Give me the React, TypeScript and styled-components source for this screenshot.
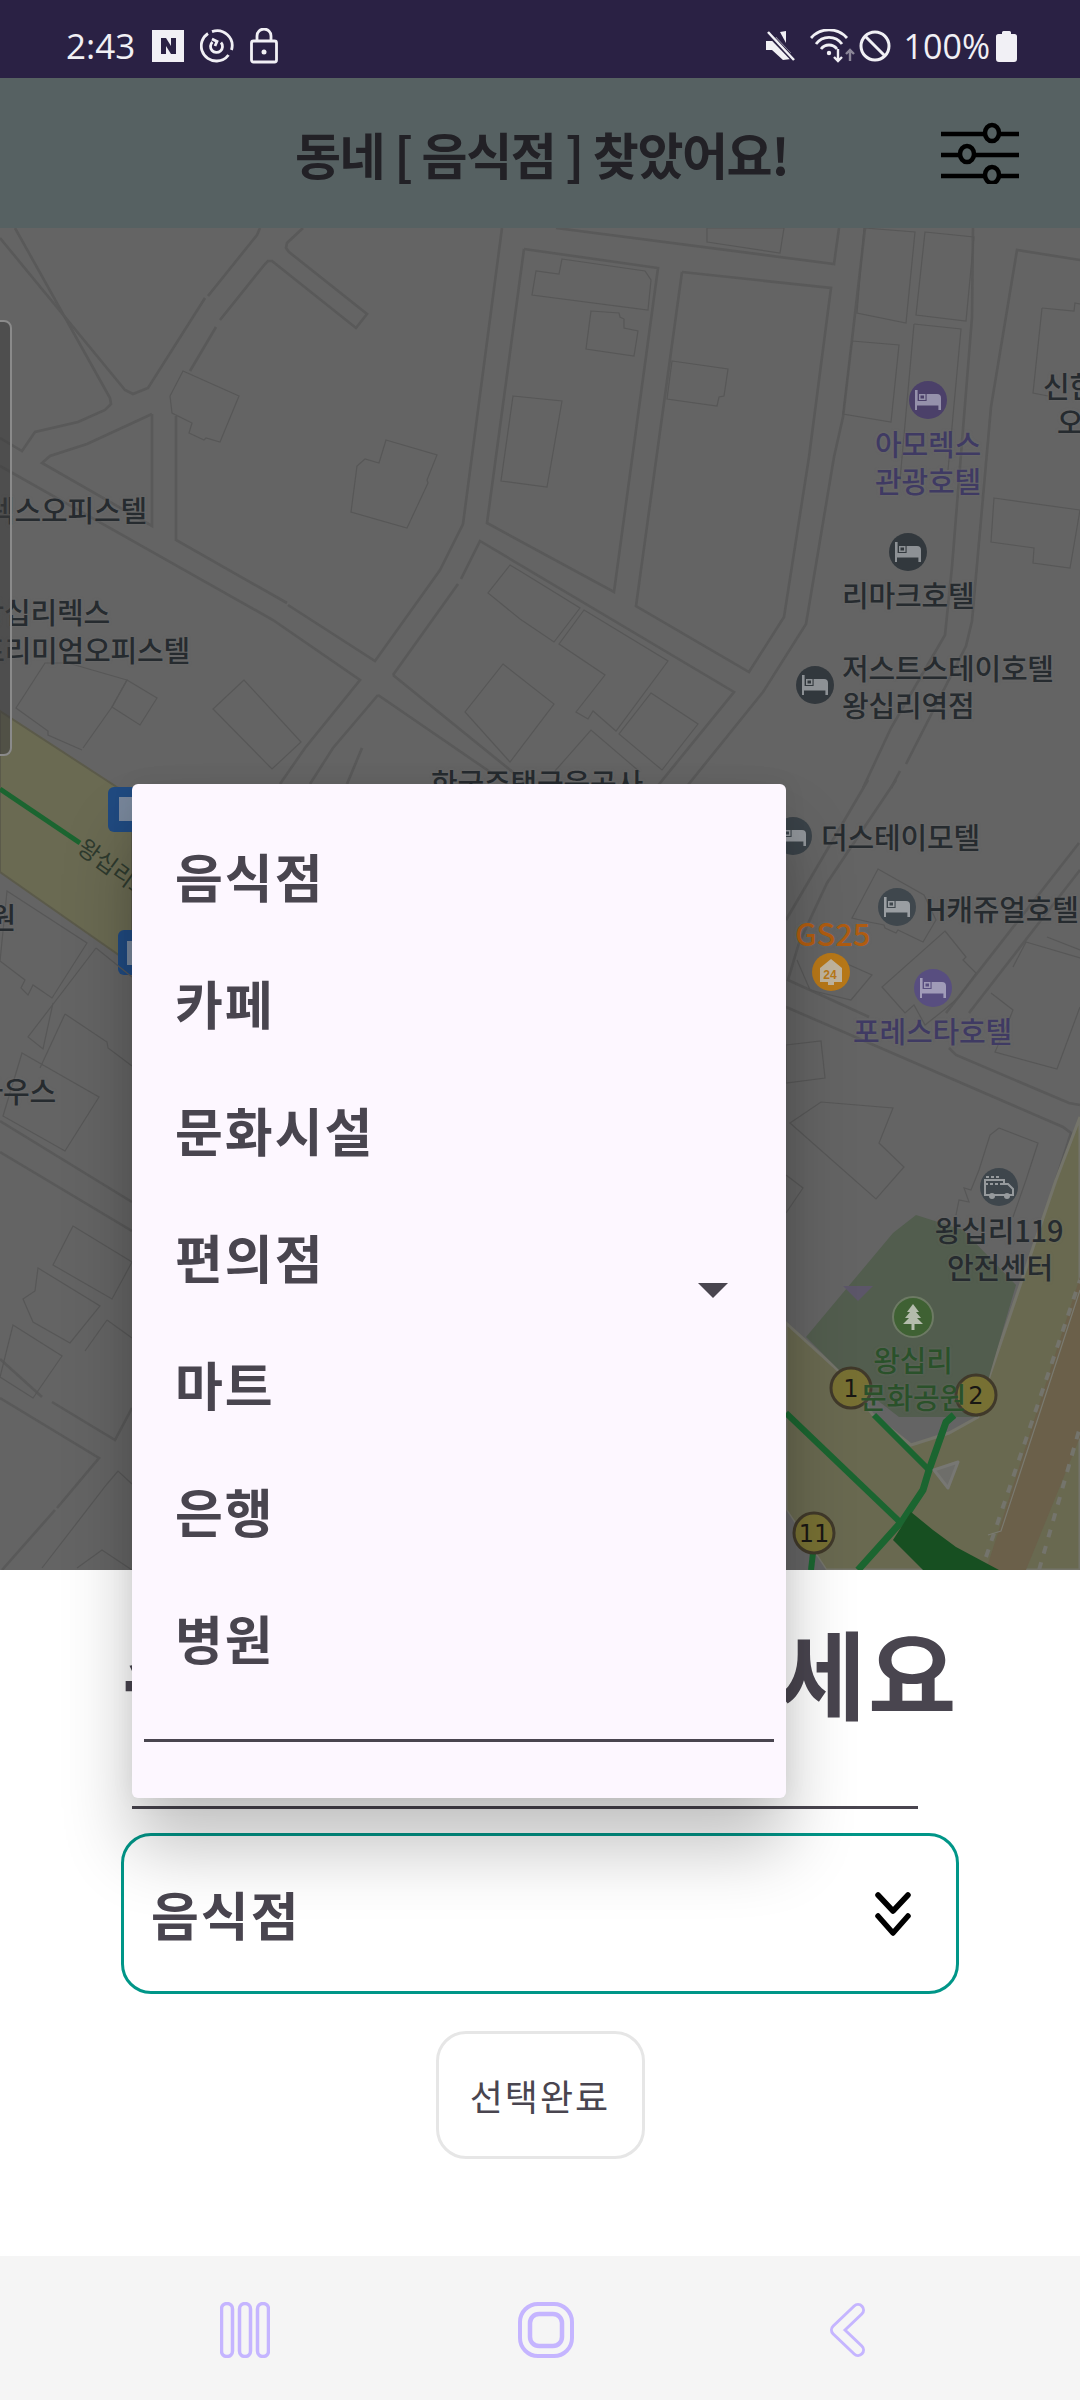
import React from 'react';
import styled, { createGlobalStyle } from 'styled-components';

const FONT = `"Noto Sans CJK KR", "Noto Sans", sans-serif`;
const MAP_TOP = 228;

const GlobalStyle = createGlobalStyle`
    html, body {
        margin: 0;
        padding: 0;
        background: #ffffff;
    }
    * {
        box-sizing: border-box;
    }
`;

const Page = styled.div`
    position: relative;
    width: 1080px;
    height: 2400px;
    display: flex;
    flex-direction: column;
    overflow: hidden;
    font-family: ${FONT};
`;

const StatusBar = styled.div`
    height: 78px;
    flex: none;
    padding: 14px 63px 0 66px;
    display: flex;
    align-items: center;
    justify-content: space-between;
    background: #2a2144;
    color: #f1f0f5;
`;

const StatusGroup = styled.div`
    display: flex;
    align-items: center;
`;

const StatusText = styled.span<{ $size: number; $gap: number }>`
    font-family: "Open Sans", sans-serif;
    font-size: ${(props) => props.$size}px;
    line-height: 40px;
    margin-right: ${(props) => props.$gap}px;
`;

const Header = styled.div`
    position: relative;
    height: 150px;
    flex: none;
    padding: 0 61px 0 295px;
    display: flex;
    align-items: center;
    justify-content: space-between;
    background: #566162;
`;

const HeaderTitle = styled.h1`
    margin: 0;
    font-size: 50px;
    font-weight: 700;
    letter-spacing: -1.4px;
    color: #222126;
    white-space: nowrap;
`;

const MapArea = styled.div`
    position: relative;
    height: 1342px;
    flex: none;
    overflow: hidden;
    background: #646464;
`;

const MapDrawing = styled.svg`
    display: block;
`;

const MapLabel = styled.span<{ $x: number; $y: number; $anchor?: 'start' | 'middle' | 'end'; $color?: string; $size?: number }>`
    position: absolute;
    left: ${(props) => props.$x}px;
    top: ${(props) => props.$y - MAP_TOP}px;
    transform: translateX(${(props) => (props.$anchor === 'end' ? '-100%' : props.$anchor === 'middle' ? '-50%' : '0')});
    font-size: ${(props) => props.$size ?? 29}px;
    font-weight: 500;
    line-height: 1;
    letter-spacing: -0.2px;
    color: ${(props) => props.$color ?? '#262b2f'};
    text-shadow: 0 0 3px rgba(120, 120, 120, 0.5);
    white-space: nowrap;
`;

const RoadLabel = styled.span`
    position: absolute;
    left: 88px;
    top: ${834 - MAP_TOP}px;
    transform: rotate(36deg);
    transform-origin: left top;
    font-size: 23px;
    line-height: 1;
    color: #2e3a2e;
    white-space: nowrap;
`;

const SideRail = styled.div`
    position: absolute;
    left: -10px;
    top: ${320 - MAP_TOP}px;
    width: 22px;
    height: 436px;
    border: 2px solid #8a8a8a;
    border-radius: 8px;
    background: rgba(60, 60, 60, 0.55);
`;

const BottomPanel = styled.div`
    flex: 1;
    padding-top: 36px;
    display: flex;
    flex-direction: column;
    align-items: center;
    background: #ffffff;
    color: #49454f;
`;

const PanelTitle = styled.div`
    height: 130px;
    font-size: 96px;
    font-weight: 700;
    line-height: 130px;
    letter-spacing: 2px;
    white-space: nowrap;
`;

const TitleRule = styled.div`
    width: 786px;
    height: 3px;
    margin: 70px 30px 0 0;
    background: #49454f;
`;

const SelectBox = styled.div`
    width: 838px;
    height: 161px;
    margin-top: 24px;
    padding: 0 45px 0 27px;
    display: flex;
    align-items: center;
    justify-content: space-between;
    border: 3px solid #009688;
    border-radius: 30px;
`;

const SelectValue = styled.span`
    font-size: 52px;
    font-weight: 700;
    letter-spacing: 2px;
`;

const DoneButton = styled.button`
    width: 209px;
    height: 128px;
    margin-top: 37px;
    padding: 0;
    border: 3px solid #e6e6e6;
    border-radius: 30px;
    background: #ffffff;
    color: #49454f;
    font-family: ${FONT};
    font-size: 36px;
    letter-spacing: 2px;
`;

const NavBar = styled.div`
    height: 144px;
    flex: none;
    padding: 0 214px 0 0;
    display: grid;
    grid-template-columns: 487px 130px 1fr;
    align-items: center;
    background: #f5f5f5;
`;

const NavSlot = styled.div<{ $justify: string; $indent?: number }>`
    display: flex;
    justify-content: ${(props) => props.$justify};
    padding-left: ${(props) => props.$indent ?? 0}px;
    padding-top: 4px;
`;

const DropMenu = styled.div`
    position: absolute;
    left: 132px;
    top: 784px;
    width: 654px;
    height: 1014px;
    padding-top: 28px;
    display: flex;
    flex-direction: column;
    border-radius: 6px;
    background: #fdf7ff;
    box-shadow: 0 50px 70px rgba(0, 0, 0, 0.24), 0 0 24px rgba(0, 0, 0, 0.06);
`;

const MenuItem = styled.div`
    height: 127px;
    padding-left: 43px;
    display: flex;
    align-items: center;
    font-size: 52px;
    font-weight: 700;
    letter-spacing: 2px;
    color: #49454f;
`;

const MenuRule = styled.div`
    height: 3px;
    margin: 38px 12px 0;
    background: #49454f;
`;

const MenuCaret = styled.div`
    position: absolute;
    left: 566px;
    top: 499px;
    width: 0;
    height: 0;
    border-left: 15px solid transparent;
    border-right: 15px solid transparent;
    border-top: 15px solid #49454f;
`;

const PinNumber = styled.text`
    font-family: "DejaVu Sans", sans-serif;
    font-size: 24px;
    fill: #191714;
    text-anchor: middle;
`;

const PinSmallText = styled.text`
    font-family: "Liberation Sans", sans-serif;
    font-size: 12px;
    font-weight: 700;
    fill: #b87818;
    text-anchor: middle;
`;

const ROADS = [
    '15,228 110,398 111,404 105,410 78,422 35,432 22,451 0,438',
    '0,238 125,390 133,394 148,388 205,298',
    '208,296 257,235 260,228',
    '303,228 287,243 286,248 289,252 367,314 356,328 272,261 268,261 265,264 220,320',
    '216,327 190,371',
    '152,414 87,444 50,456 42,463 152,526 152,414',
    '0,466 273,620 360,680 305,748 280,784',
    '176,416 176,540 287,603',
    '288,605 375,661 440,570 463,524 502,228',
    '524,249 658,268 614,592 487,523 524,249',
    '682,272 831,288 809,457 784,617 749,672 636,606 682,272',
    '556,228 834,264 839,228',
    '865,228 843,417 834,457 806,624 763,692 688,785',
    '973,228 972,317 952,567 945,635 891,728 863,788',
    '1080,260 1017,250 991,407 972,621 966,646 906,764',
    '900,771 891,788',
    '393,675 458,584',
    '461,579 480,541 734,692 656,788',
    '393,675 483,748 530,786',
    '378,695 333,748 310,784',
    '378,695 480,765 510,786',
    '347,784 362,748',
    '868,780 786,920',
    '896,780 827,883 799,943 788,980 869,1017',
    '786,1007 1063,1127 1071,1133 1056,1180',
    '949,1048 956,1055 1069,1103 1080,1105',
    '1079,843 946,1013',
    '1080,870 969,1013',
    '0,1121 132,1202',
    '0,1152 132,1231',
    '0,1359 42,1397',
    '52,1402 115,1440 132,1408',
    '0,1398 99,1458 57,1508',
    '55,1510 2,1570',
];

const BUILDINGS = [
    '183,371 239,396 220,442 206,438 204,440 189,433 192,423 172,413 170,396',
    '386,440 437,455 427,480 428,483 407,528 351,512 357,466 365,459 379,463',
    '562,259 645,271 651,280 648,310 532,295 536,271 559,274',
    '591,311 619,313 620,317 624,319 624,328 638,331 634,356 586,349',
    '513,396 562,401 547,487 501,481',
    '672,361 728,369 724,396 719,397 717,406 667,399',
    '707,242 780,253 784,228 707,228',
    '864,228 915,232 906,323 857,313',
    '925,232 974,237 966,321 916,315',
    '852,341 899,345 891,422 843,414',
    '994,498 1080,510 1070,568 1033,563 1034,548 991,542',
    '510,565 488,593 520,619 554,642 580,608 520,571',
    '584,610 668,661 616,731 593,711 588,719 576,712 605,675 559,644',
    '651,693 698,724 662,770 619,734',
    '503,664 554,704 510,762 465,712',
    '244,680 213,709 272,769 301,742',
    '127,680 157,698 140,725 112,707',
    '878,869 924,895 936,920 923,942 898,930 896,933 885,928 884,925 869,922 852,918',
    '945,931 966,957 963,960 976,973 959,997 944,1010 925,1025 914,1005 905,1013 882,987',
    '786,1045 821,1041 825,1078 786,1083',
    '790,1123 821,1102 893,1108 879,1143 904,1167 876,1199',
    '7,891 87,943 52,998 33,985 28,995 21,988 25,980 0,961',
    '22,1053 99,1097 65,1151 3,1116',
    '73,1226 132,1262 112,1299 53,1265',
    '38,1268 100,1306 70,1343 33,1322 23,1299 35,1291',
    '13,1325 62,1356 33,1398 0,1377',
];

const OUTLINES = [
    '914,324 961,329 948,470',
    '914,324 900,480',
    '1042,308 1074,311 1075,303 1080,304',
    '1042,308 1033,393 1048,396',
    '555,771 591,730 640,772',
    '68,663 45,663 16,708 48,731 48,735 82,750',
    '68,663 127,680 112,707 83,748',
    '96,948 28,1037 43,1049 53,1003',
    '96,948 132,977',
    '65,1014 107,1042 108,1048 132,1066',
    '65,1014 40,1068',
    '107,1320 132,1338',
    '107,1320 85,1351',
    '42,1568 107,1484 118,1471 132,1484',
    '77,1568 102,1550 132,1570',
    '797,960 810,990 851,1000 872,975 845,963',
    '991,993 1013,1010 1009,1020 995,1052 1057,1069 1080,1007',
    '1026,942 1080,958',
    '1026,942 1013,967',
    '1047,937 1080,950',
    '999,1128 1038,1143 1026,1180 1013,1217',
    '999,1128 990,1135 979,1170 971,1190 964,1188 969,1202 959,1200 956,1215',
    '786,1175 803,1188 786,1213',
];

const Bed = ({ x, y, fill, ink }: { x: number; y: number; fill: string; ink: string }) => (
    <g transform={`translate(${x} ${y})`}>
        <circle r="19" fill={fill} />
        <path d="M-13 -10h2.600v11h9v-7h10.400a4 4 0 0 1 4 4v12h-2.600v-4.500h-21.400v4.500h-2z" fill={ink} />
        <rect x="-9" y="-6" width="6.500" height="6" fill={ink} />
        <rect x="-7.500" y="-4.500" width="3.500" height="3" fill={fill} />
    </g>
);

const NumberPin = ({ x, y, label }: { x: number; y: number; label: string }) => (
    <g>
        <circle cx={x} cy={y} r="20" fill="#777033" stroke="#40392a" strokeWidth="3" />
        <PinNumber x={x} y={y + 9}>{label}</PinNumber>
    </g>
);

const CityMap = () => (
    <MapDrawing width="1080" height="1342" viewBox={`0 ${MAP_TOP} 1080 1342`}>
        <polygon points="0,711 132,797 132,966 123,958 0,872" fill="#6a6a52" stroke="#5b5a4a" strokeWidth="2" />
        <polyline points="0,789 80,843" fill="none" stroke="#1b6530" strokeWidth="5" />
        <rect x="108" y="787" width="40" height="45" rx="6" fill="#204a80" />
        <rect x="118" y="930" width="40" height="45" rx="6" fill="#204a80" />
        <rect x="119" y="797" width="13" height="24" fill="#78879b" />
        <rect x="127" y="941" width="5" height="24" fill="#78879b" />

        {ROADS.map((points) => (
            <polyline key={points} points={points} fill="none" stroke="#595959" strokeWidth="2.600" />
        ))}
        {BUILDINGS.map((points) => (
            <polygon key={points} points={points} fill="none" stroke="#575757" strokeWidth="1.200" />
        ))}
        {OUTLINES.map((points) => (
            <polyline key={points} points={points} fill="none" stroke="#575757" strokeWidth="1.200" />
        ))}

        <polygon
            points="786,1323 841,1373 873,1415 911,1445 949,1433 978,1417 989,1377 1056,1180 1080,1117 1080,1570 826,1570 786,1510"
            fill="#696950"
            stroke="#74746a"
            strokeWidth="3"
        />
        <polygon points="786,1510 826,1570 786,1570" fill="#646464" />
        <polygon points="986,1570 1080,1277 1080,1437 1026,1570" fill="#6b604a" />
        <polyline points="986,1557 1080,1280" fill="none" stroke="#74746c" strokeWidth="4" strokeDasharray="8 9" />
        <polyline points="1039,1570 1080,1427" fill="none" stroke="#74746c" strokeWidth="4" strokeDasharray="8 9" />
        <polyline points="988,1535 1001,1531 1080,1290" fill="none" stroke="#7a7a70" strokeWidth="1.200" />
        <polygon points="916,1215 893,1233 806,1337 841,1372 899,1417 978,1417 991,1370 1016,1285 963,1230" fill="#525d4e" />

        <polyline points="786,1413 901,1523" fill="none" stroke="#1b6530" strokeWidth="6" />
        <polyline points="874,1415 929,1470" fill="none" stroke="#1b6530" strokeWidth="6" />
        <polyline points="954,1415 946,1422 929,1470 923,1490 903,1520 858,1570" fill="none" stroke="#1b6530" strokeWidth="7" />
        <polyline points="813,1553 811,1570" fill="none" stroke="#1b6530" strokeWidth="6" />
        <polygon points="911,1512 893,1540 923,1570 999,1570 956,1547 933,1530" fill="#174f21" />
        <polygon points="934,1470 958,1462 948,1488" fill="#6e6e6a" stroke="#777773" strokeWidth="3" strokeLinejoin="round" />
        <polygon points="843,1286 873,1286 858,1301" fill="#5c5669" />

        <Bed x={928} y={400} fill="#4b4069" ink="#9591ab" />
        <Bed x={908} y={552} fill="#32383d" ink="#8d9195" />
        <Bed x={815} y={685} fill="#32383d" ink="#8d9195" />
        <Bed x={793} y={836} fill="#3a4248" ink="#91959a" />
        <Bed x={897} y={907} fill="#3f474d" ink="#9a9ea2" />
        <Bed x={933} y={988} fill="#584e80" ink="#a09bb8" />

        <g transform="translate(831 972)">
            <circle r="19" fill="#b87818" />
            <path d="M0 -13L11 -4V10H3V13H-3V10H-11V-4Z" fill="#c0b49e" />
            <PinSmallText x="-1" y="7">24</PinSmallText>
        </g>

        <g transform="translate(999 1187)">
            <circle r="19" fill="#3e464c" />
            <path d="M-14 -7H5V-3H9L14 2V8H-14Z" fill="none" stroke="#969a9d" strokeWidth="2" />
            <path d="M-14 -3H4M-13 -10H2" stroke="#969a9d" strokeWidth="2" strokeDasharray="3 2" fill="none" />
            <circle cx="-7" cy="9" r="3" fill="#969a9d" />
            <circle cx="8" cy="9" r="3" fill="#969a9d" />
        </g>

        <g transform="translate(913 1317)">
            <circle r="20" fill="#3f6133" stroke="#6d7a64" strokeWidth="2" />
            <path d="M0 -13L6 -5H3L8 1H4L10 7H1.500V13H-1.500V7H-10L-4 1H-8L-3 -5H-6Z" fill="#b4bcac" />
        </g>

        <NumberPin x={851} y={1388} label="1" />
        <NumberPin x={976} y={1395} label="2" />
        <NumberPin x={814} y={1533} label="11" />
    </MapDrawing>
);

const FilterIcon = () => (
    <svg width="78" height="62" viewBox="0 0 78 62" fill="none" stroke="#000" strokeWidth="4.500">
        <path d="M0 12H43M59 12H78M0 33H18M34 33H78M0 54H43M59 54H78" />
        <ellipse cx="51" cy="11" rx="7" ry="8" />
        <ellipse cx="26" cy="32" rx="7" ry="8" />
        <ellipse cx="51" cy="53" rx="7" ry="8" />
    </svg>
);

const NoticeN = () => (
    <svg width="32" height="32" viewBox="0 0 32 32" style={{ marginRight: 16 }}>
        <rect width="32" height="32" fill="#f1f0f5" />
        <path d="M9 8H14L19 16V8H24V24H19L14 16V24H9Z" fill="#2a2144" />
    </svg>
);

const SyncIcon = () => (
    <svg width="34" height="34" viewBox="0 0 34 34" fill="none" stroke="#f1f0f5" strokeWidth="2.800" style={{ marginRight: 16 }}>
        <path d="M8 4.500A15 15 0 0 0 17 32A15 15 0 0 0 28.500 26" />
        <path d="M12 2.600A15 15 0 0 1 31.500 21" />
        <path d="M21 13.500A6 6 0 1 1 12.500 13" />
        <path d="M12 10L17 12.500L15 17" />
    </svg>
);

const LockIcon = () => (
    <svg width="28" height="36" viewBox="0 0 28 36" fill="none" stroke="#f1f0f5" strokeWidth="2.800">
        <rect x="1.500" y="13" width="25" height="21" rx="2" />
        <path d="M7 13V8A7 7 0 0 1 21 8V13" />
        <circle cx="14" cy="24" r="2.500" fill="#f1f0f5" stroke="none" />
    </svg>
);

const MuteIcon = () => (
    <svg width="32" height="30" viewBox="0 0 32 30" style={{ marginRight: 13 }}>
        <path d="M1 10H7L11 6L26 22V28L18 29L7 19H1Z" fill="#f1f0f5" />
        <path d="M15 1L21 0V12Z" fill="#f1f0f5" />
        <path d="M3 2L30 30" stroke="#2a2144" strokeWidth="5" />
        <path d="M3 1L29 29" stroke="#f1f0f5" strokeWidth="2.500" />
    </svg>
);

const WifiIcon = () => (
    <svg width="48" height="34" viewBox="0 0 48 34" fill="none" stroke="#f1f0f5" strokeWidth="2.800" style={{ marginRight: 1 }}>
        <path d="M1 9A24 24 0 0 1 37 9" />
        <path d="M6 15A16 16 0 0 1 32 15" />
        <path d="M11 20A10 10 0 0 1 27 20" />
        <circle cx="19" cy="24" r="2.200" fill="#f1f0f5" stroke="none" />
        <path d="M28 20V32M24 28L28 32L32 28" strokeWidth="2.400" />
        <path d="M40 32V21M36 25L40 21L44 25" stroke="#8b8698" strokeWidth="2.400" />
    </svg>
);

const BlockIcon = () => (
    <svg width="32" height="32" viewBox="0 0 32 32" fill="none" stroke="#f1f0f5" strokeWidth="3" style={{ margin: '0 13px 0 0' }}>
        <circle cx="16" cy="16" r="14" />
        <path d="M6 6L26 26" />
    </svg>
);

const BatteryIcon = () => (
    <svg width="21" height="31" viewBox="0 0 21 31">
        <path d="M6 3V1.500Q6 0 7.500 0H13.500Q15 0 15 1.500V3H18.500Q21 3 21 5.500V28Q21 31 18 31H3Q0 31 0 28V5.500Q0 3 2.500 3Z" fill="#f1f0f5" />
    </svg>
);

const DoubleChevron = () => (
    <svg width="36" height="44" viewBox="0 0 36 44" fill="none" stroke="#000" strokeWidth="5.500" strokeLinecap="round" strokeLinejoin="round">
        <path d="M3 3L18 19L33 3" />
        <path d="M3 24L18 41L33 24" />
    </svg>
);

const RecentsIcon = () => (
    <svg width="50" height="56" viewBox="0 0 50 56" fill="none" stroke="#c5b5ff" strokeWidth="3.500">
        <rect x="1.500" y="1.500" width="11" height="53" rx="5.500" />
        <rect x="19.500" y="1.500" width="11" height="53" rx="5.500" />
        <rect x="37.500" y="1.500" width="11" height="53" rx="5.500" />
    </svg>
);

const HomeIcon = () => (
    <svg width="56" height="56" viewBox="0 0 56 56" fill="none" stroke="#c5b5ff" strokeWidth="4">
        <rect x="2" y="2" width="52" height="52" rx="18" />
        <rect x="12" y="12" width="32" height="32" rx="9" strokeWidth="4.500" />
    </svg>
);

const BackIcon = () => (
    <svg width="38" height="56" viewBox="0 0 38 56" fill="none" strokeLinecap="round" strokeLinejoin="round">
        <path d="M30 8L9 28L30 48" stroke="#c5b5ff" strokeWidth="14" />
        <path d="M30 8L9 28L30 48" stroke="#f5f5f5" strokeWidth="8" />
    </svg>
);

const MENU_ITEMS = ['음식점', '카페', '문화시설', '편의점', '마트', '은행', '병원'];
const PURPLE = '#3f3a63';
const PARK = '#2a512a';

const App: React.FC = () => {
    return (
        <Page>
            <GlobalStyle />
            <StatusBar>
                <StatusGroup>
                    <StatusText $size={35} $gap={17}>2:43</StatusText>
                    <NoticeN />
                    <SyncIcon />
                    <LockIcon />
                </StatusGroup>
                <StatusGroup>
                    <MuteIcon />
                    <WifiIcon />
                    <BlockIcon />
                    <StatusText $size={34} $gap={6}>100%</StatusText>
                    <BatteryIcon />
                </StatusGroup>
            </StatusBar>

            <Header>
                <HeaderTitle>동네 [ 음식점 ] 찾았어요!</HeaderTitle>
                <FilterIcon />
            </Header>

            <MapArea>
                <CityMap />
                <MapLabel $x={147} $y={495} $anchor="end">렉스오피스텔</MapLabel>
                <MapLabel $x={110} $y={597} $anchor="end">왕십리렉스</MapLabel>
                <MapLabel $x={190} $y={635} $anchor="end">프리미엄오피스텔</MapLabel>
                <MapLabel $x={928} $y={429} $anchor="middle" $color={PURPLE}>아모렉스</MapLabel>
                <MapLabel $x={928} $y={466} $anchor="middle" $color={PURPLE}>관광호텔</MapLabel>
                <MapLabel $x={842} $y={580}>리마크호텔</MapLabel>
                <MapLabel $x={842} $y={653}>저스트스테이호텔</MapLabel>
                <MapLabel $x={842} $y={690}>왕십리역점</MapLabel>
                <MapLabel $x={1043} $y={371}>신한</MapLabel>
                <MapLabel $x={1057} $y={407}>오</MapLabel>
                <MapLabel $x={537} $y={768} $anchor="middle">한국주택금융공사</MapLabel>
                <MapLabel $x={821} $y={822}>더스테이모텔</MapLabel>
                <MapLabel $x={925} $y={894}>H캐쥬얼호텔</MapLabel>
                <MapLabel $x={795} $y={917} $color="#b05c10" $size={31}>GS25</MapLabel>
                <MapLabel $x={853} $y={1016} $color={PURPLE}>포레스타호텔</MapLabel>
                <MapLabel $x={999} $y={1215} $anchor="middle">왕십리119</MapLabel>
                <MapLabel $x={1000} $y={1252} $anchor="middle">안전센터</MapLabel>
                <MapLabel $x={913} $y={1345} $anchor="middle" $color={PARK}>왕십리</MapLabel>
                <MapLabel $x={913} $y={1382} $anchor="middle" $color={PARK}>문화공원</MapLabel>
                <MapLabel $x={16} $y={902} $anchor="end">공원</MapLabel>
                <MapLabel $x={56} $y={1076} $anchor="end">하우스</MapLabel>
                <RoadLabel>왕십리로</RoadLabel>
                <SideRail />
            </MapArea>

            <BottomPanel>
                <PanelTitle>주변시설 선택하세요</PanelTitle>
                <TitleRule />
                <SelectBox>
                    <SelectValue>음식점</SelectValue>
                    <DoubleChevron />
                </SelectBox>
                <DoneButton>선택완료</DoneButton>
            </BottomPanel>

            <NavBar>
                <NavSlot $justify="flex-start" $indent={220}><RecentsIcon /></NavSlot>
                <NavSlot $justify="flex-start" $indent={31}><HomeIcon /></NavSlot>
                <NavSlot $justify="flex-end"><BackIcon /></NavSlot>
            </NavBar>

            <DropMenu>
                {MENU_ITEMS.map((item) => (
                    <MenuItem key={item}>{item}</MenuItem>
                ))}
                <MenuRule />
                <MenuCaret />
            </DropMenu>
        </Page>
    );
};

export default App;
